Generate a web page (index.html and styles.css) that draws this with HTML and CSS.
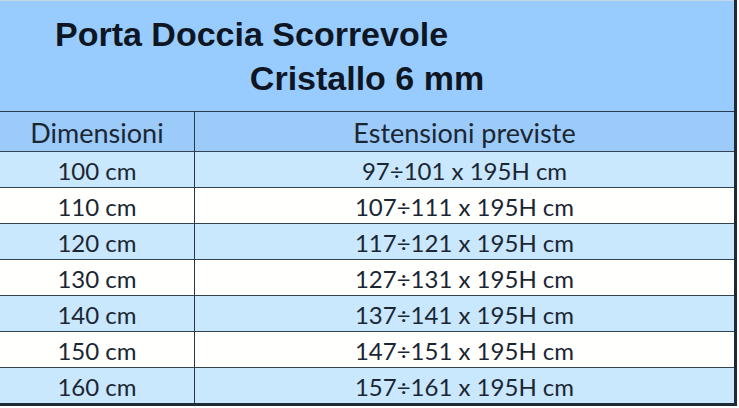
FILE: index.html
```html
<!DOCTYPE html>
<html lang="it">
<head>
<meta charset="utf-8">
<title>Porta Doccia Scorrevole</title>
<link rel="stylesheet" href="styles.css">
</head>
<body>
<div class="sheet">
  <div class="title">
    <div class="title-line first">Porta Doccia Scorrevole</div>
    <div class="title-line second">Cristallo 6 mm</div>
  </div>
  <div class="grid">
    <div class="cell head left">Dimensioni</div>
    <div class="cell head">Estensioni previste</div>
    <div class="cell tint left">100 cm</div>
    <div class="cell tint">97÷101 x 195H cm</div>
    <div class="cell left">110 cm</div>
    <div class="cell">107÷111 x 195H cm</div>
    <div class="cell tint left">120 cm</div>
    <div class="cell tint">117÷121 x 195H cm</div>
    <div class="cell left">130 cm</div>
    <div class="cell">127÷131 x 195H cm</div>
    <div class="cell tint left">140 cm</div>
    <div class="cell tint">137÷141 x 195H cm</div>
    <div class="cell left">150 cm</div>
    <div class="cell">147÷151 x 195H cm</div>
    <div class="cell tint left last">160 cm</div>
    <div class="cell tint last">157÷161 x 195H cm</div>
  </div>
</div>
</body>
</html>
```

FILE: styles.css
```css
html, body {
  margin: 0;
  padding: 0;
  background: #ffffff;
}

.sheet {
  width: 734px;
  border-right: 3px solid #1e2a36;
  border-bottom: 3px solid #1e2a36;
}

.title {
  background: #99ccfe;
  border-top: 1px solid #c8d6e4;
  border-bottom: 1px solid #2a3a4a;
  padding-top: 11px;
  box-sizing: border-box;
  height: 112px;
  display: flex;
  flex-direction: column;
  font-family: "Liberation Sans", Arial, sans-serif;
  font-weight: bold;
  font-size: 34px;
  line-height: 44px;
  color: #0e1624;
}

.title-line.first {
  align-self: flex-start;
  margin-left: 55px;
}

.title-line.second {
  align-self: center;
}

.grid {
  display: grid;
  grid-template-columns: 195px 1fr;
  font-family: Lato, "Open Sans", sans-serif;
  font-size: 24px;
  color: #1b2633;
}

.cell {
  text-align: center;
  background: #fffffd;
  border-bottom: 1px solid #34434f;
  height: 36px;
  box-sizing: border-box;
  padding-top: 2px;
  line-height: 33px;
}

.cell.left {
  border-right: 1px solid #2a3846;
}

.cell.head {
  background: #9ccbf9;
  height: 40px;
  padding-top: 3px;
  font-size: 27px;
  line-height: 35px;
}

.cell.tint {
  background: #c9e7fd;
}

.cell.last {
  border-bottom: none;
  height: 35px;
}
```
